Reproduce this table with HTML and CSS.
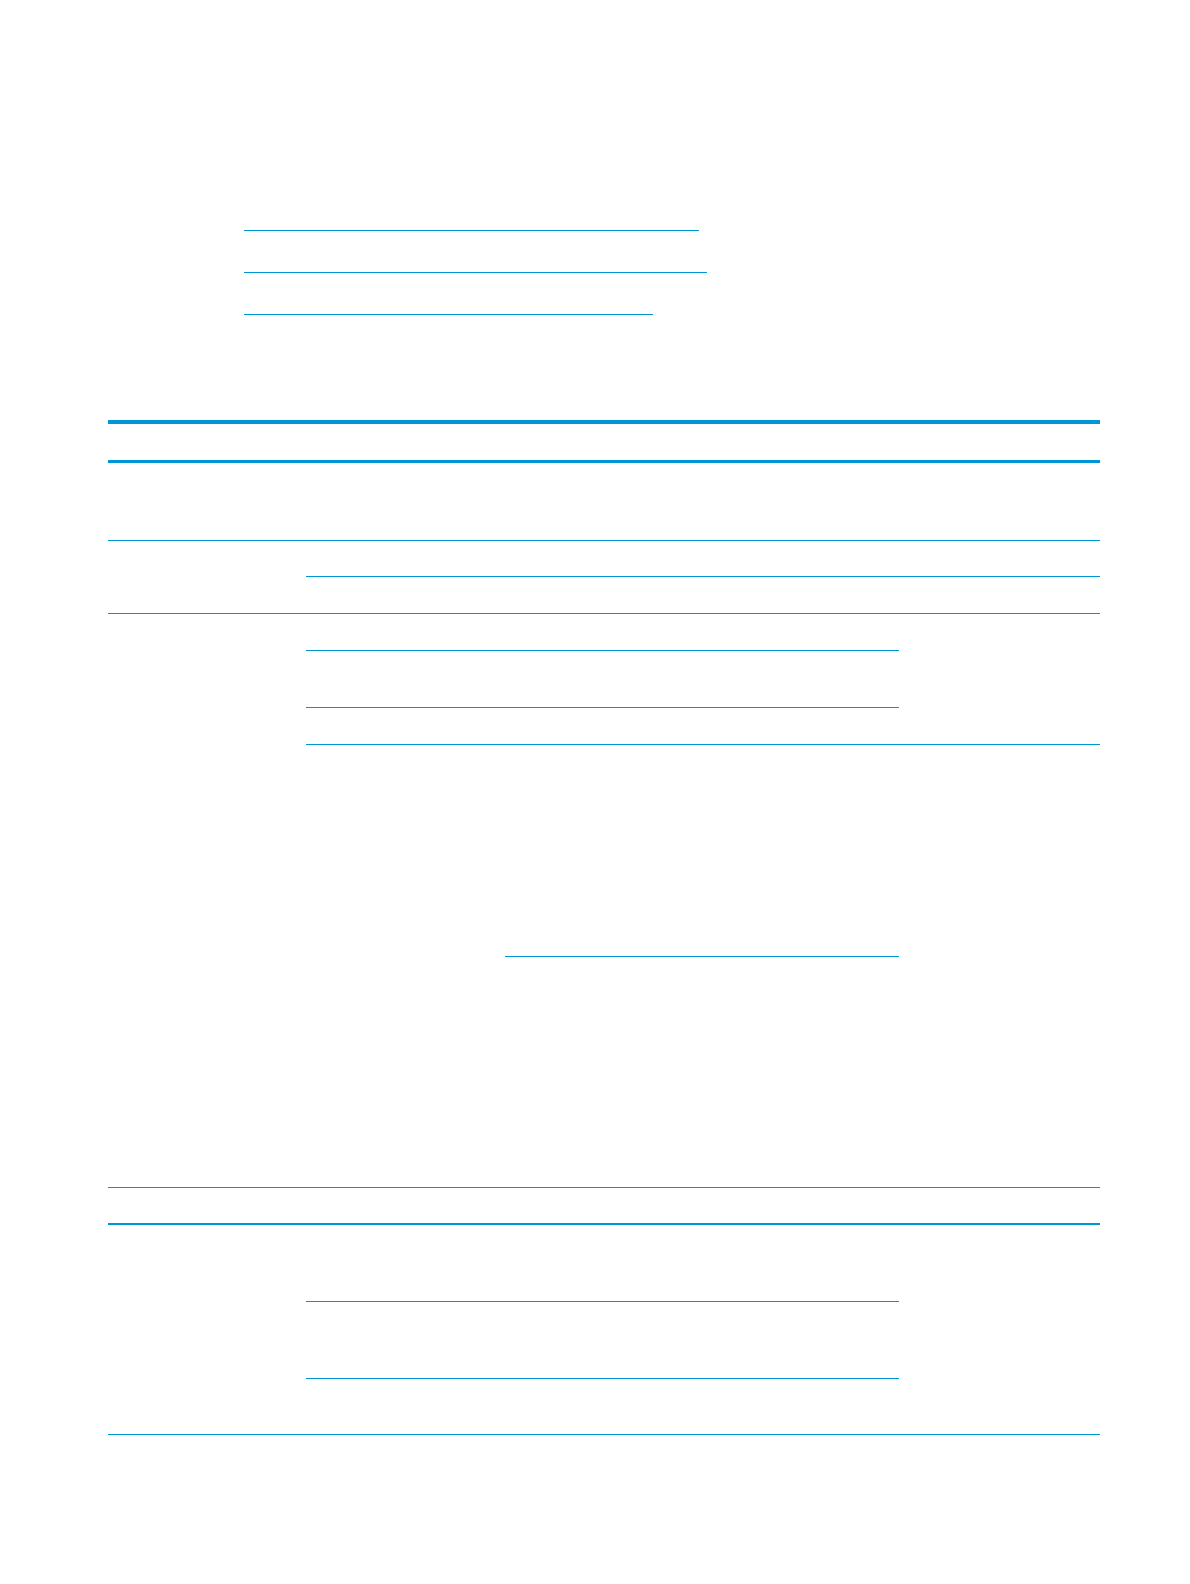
FILE: index.html
```html
<!DOCTYPE html>
<html lang="en">
<head>
<meta charset="utf-8">
<title>Document</title>
<link rel="stylesheet" href="styles.css">
</head>
<body>
<div class="page">
  <nav class="links">
    <a class="link link-a" href="#s1"></a>
    <a class="link link-b" href="#s2"></a>
    <a class="link link-c" href="#s3"></a>
  </nav>

  <div class="table">
    <div class="row head"></div>
    <div class="row r1"></div>

    <div class="row group g2">
      <div class="c1"></div>
      <div class="right">
        <div class="sub full h36"></div>
      </div>
    </div>

    <div class="row group g3">
      <div class="c1"></div>
      <div class="right">
        <div class="sub split h37"><div class="c2 bb"></div><div class="c3"></div></div>
        <div class="sub split h57"><div class="c2 bb"></div><div class="c3"></div></div>
        <div class="sub full h37"></div>
        <div class="nested"><div class="spacer"></div><div class="ncell"></div></div>
      </div>
    </div>

    <div class="row g4"></div>

    <div class="row group g5">
      <div class="c1"></div>
      <div class="right">
        <div class="sub split h77"><div class="c2 bb"></div><div class="c3"></div></div>
        <div class="sub split h77"><div class="c2 bb"></div><div class="c3"></div></div>
      </div>
    </div>
  </div>
</div>
</body>
</html>
```

FILE: styles.css
```css
* { box-sizing: border-box; }
html, body { margin: 0; padding: 0; background: #ffffff; }
body { font-family: "Liberation Sans", Arial, sans-serif; color: #000; }

.page { width: 1190px; min-height: 1584px; padding-left: 108px; }

.links {
  display: flex;
  flex-direction: column;
  gap: 24px;
  padding-top: 213px;
  padding-left: 136px;
}
.link {
  display: block;
  height: 18px;
  border-bottom: 1px solid #0096d6;
  text-decoration: none;
}
.link-a { width: 455px; }
.link-b { width: 463px; }
.link-c { width: 409px; }

.table {
  width: 992px;
  margin-top: 105px;
  border-top: 4px solid #0096d6;
}
.row { border-bottom: 1px solid #0096d6; }
.head { height: 39px; border-bottom-width: 3px; }
.r1 { height: 78px; }

.group { display: grid; grid-template-columns: 198px 794px; }
.g2 { height: 73px; }
.g3 { height: 574px; }
.g4 { height: 37px; border-bottom-width: 2px; }
.g5 { height: 210px; }

.right { display: flex; flex-direction: column; }
.sub.full { border-bottom: 1px solid #0096d6; }
.sub.split { display: grid; grid-template-columns: 593px 201px; }
.bb { border-bottom: 1px solid #0096d6; }

.h36 { height: 36px; }
.h37 { height: 37px; }
.h57 { height: 57px; }
.h77 { height: 77px; }

.nested { display: grid; grid-template-columns: 199px 394px; }
.ncell { height: 212px; border-bottom: 1px solid #0096d6; }
```
